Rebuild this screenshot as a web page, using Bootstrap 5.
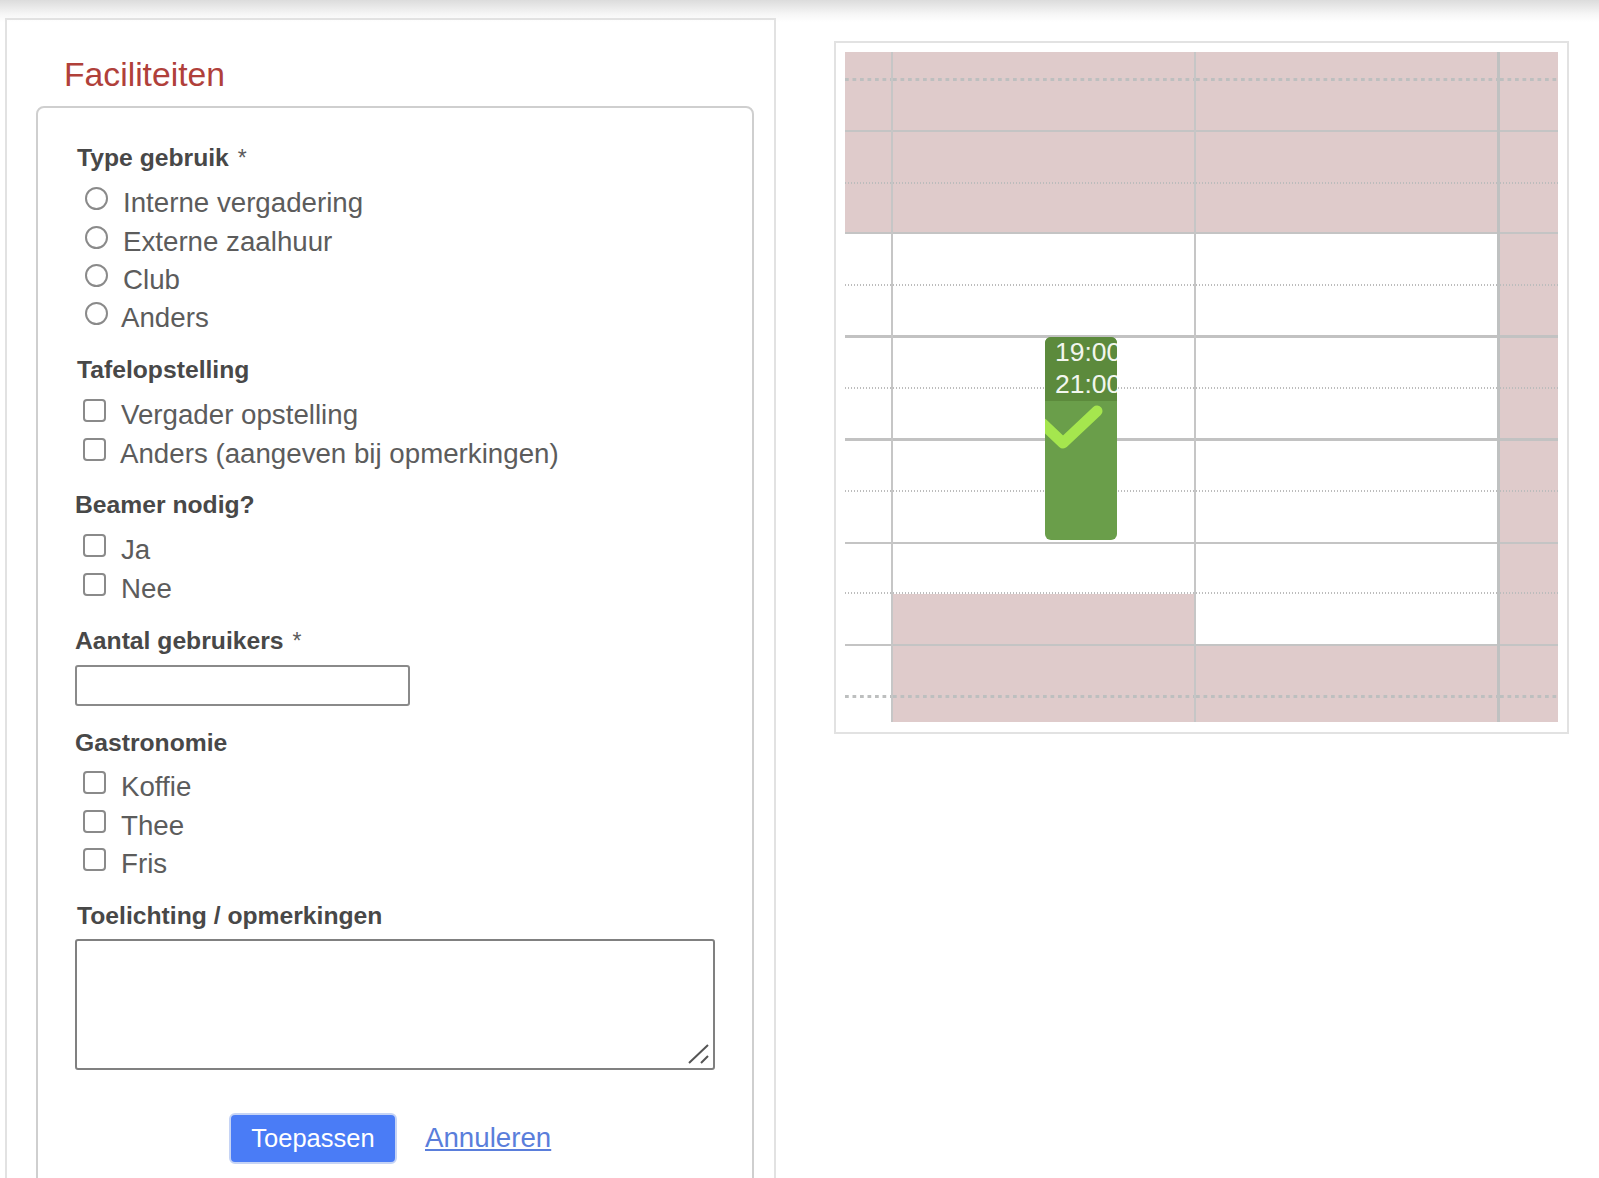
<!DOCTYPE html>
<html lang="nl">
<head>
<meta charset="utf-8">
<title>Faciliteiten</title>
<link rel="stylesheet" href="https://cdn.jsdelivr.net/npm/bootstrap@5.3.0/dist/css/bootstrap.min.css">
<style>
html, body { height: 1178px; overflow: hidden; }
body {
  font-family: "Liberation Sans", Arial, sans-serif;
  color: #555;
  background: #fff linear-gradient(to bottom, #dcdcdc, #f6f6f6 14px, #fff 22px) no-repeat top / 100% 22px;
}
.page-wrap { padding: 18px 0 0 5px; gap: 58px; }
.left-panel { width: 771px; height: 1300px; border: 2px solid #e2e2e2; padding: 34px 20px 0 29px; flex-shrink: 0; }
.panel-title { font-size: 33.7px; line-height: 40px; font-weight: 400; color: #b0403a; margin: 0 0 12px 28px; }
.form-box { border: 2px solid #cfcfcf; border-radius: 8px; padding: 35px 36px 200px 39px; }
.grp { margin-bottom: 17px; }
.grp-wide { margin-bottom: 18px; }
.grp-input { margin-bottom: 22px; }
.grp-food { margin-bottom: 17.5px; }
.grp-label { display: block; font-size: 24.7px; line-height: 30px; font-weight: 700; color: #484848; margin-bottom: 11px; }
.grp-label span { font-weight: 400; font-size: 23px; color: #5c5c5c; margin-left: 2px; }
.grp-label.tight { margin-bottom: 9px; }
.grp-label.tighter { margin-bottom: 8px; }
.grp-label.mid { margin-bottom: 10px; }
.grp-label.shift { margin-left: -2px; }
.opt { display: flex; align-items: center; height: 38.5px; min-height: 0; padding: 0; margin: 0; font-size: 27.7px; color: #5c5c5c; }
.opt.opt-up { padding-bottom: 2px; }
.form-check .form-check-input.opt-box {
  float: none; flex-shrink: 0; width: 23px; height: 23px; margin: -9px 15px 0 6px;
  border: 2px solid #8a8a8a; background-color: #fff; border-radius: 4px;
}
.form-check .form-check-input.opt-round { margin: -9px 15px 0 8px; border-radius: 50%; }
.form-check .form-check-input.opt-round.pull { margin-right: 13px; }
.form-check .form-check-input.opt-box.pull-one { margin-right: 14px; }
.num-input.form-control { width: 335px; height: 41px; margin-left: -2px; border: 2px solid #8a8a8a; border-radius: 3px; }
.note-wrap { width: 640px; height: 131px; margin-left: -2px; }
.note-input.form-control { width: 100%; height: 100%; resize: none; border: 2px solid #808080; border-radius: 3px; }
.grip { position: absolute; right: 4px; bottom: 5px; }
.act-row { gap: 28px; padding: 43px 0 0 152px; }
.act-btn.btn { width: 168px; height: 51px; padding: 0; font-size: 25.5px; line-height: 47px; background: #4a7cf6; border: 2px solid #c6d4f5; border-radius: 6px; color: #fff; }
.act-link { font-size: 27.7px; color: #5a7edb; margin-bottom: 2px; }
.cal-panel { width: 735px; height: 693px; margin-top: 23px; border: 2px solid #e2e2e2; padding: 9px 9px 0; flex-shrink: 0; }
.cal-grid { width: 713px; }
.cal-row { display: grid; grid-template-columns: 46px 303px 303px 61px; }
.cal-row:nth-child(1) { height: 29px; }
.cal-row:nth-child(2), .cal-row:nth-child(7), .cal-row:nth-child(9) { height: 51px; }
.cal-row:nth-child(3), .cal-row:nth-child(5), .cal-row:nth-child(6), .cal-row:nth-child(8), .cal-row:nth-child(10), .cal-row:nth-child(12), .cal-row:nth-child(13) { height: 52px; }
.cal-row:nth-child(4), .cal-row:nth-child(11) { height: 50px; }
.cal-row:nth-child(14) { height: 24px; }
.cal-row > div { background-repeat: repeat-x; background-position: left bottom; }
.cal-row > div:nth-child(2), .cal-row > div:nth-child(3) { border-left: 2px solid #c6c6c6; }
.cal-row > div:nth-child(4) { border-left: 3px solid #bfc1c1; }
.cal-row > div.closed { background-color: #dfcbcb; }
.ln-solid > div { background-image: linear-gradient(#c4c4c4, #c4c4c4); background-size: 100% 2px; }
.ln-heavy > div { background-image: linear-gradient(#c2c2c2, #c2c2c2); background-size: 100% 3px; }
.ln-dot > div { background-image: linear-gradient(to right, #bcbcbc 50%, transparent 50%); background-size: 3px 2px; }
.ln-bigdot > div { background-image: linear-gradient(to right, #bdbfbf 45%, transparent 45%); background-size: 7.5px 3px; }
.cal-event { position: absolute; left: 200px; top: 285px; width: 72px; height: 203px; background: #6a9e4a; border-radius: 6px; overflow: hidden; }
.ev-head { height: 64px; background: #5c8a3c; color: #f2f6ee; font-size: 26.5px; line-height: 31.5px; padding: 0 0 0 10px; white-space: nowrap; }
.ev-check { position: absolute; left: 0; top: 63px; }
</style>
</head>
<body>
<div class="page-wrap d-flex align-items-start">
  <section class="left-panel">
    <h2 class="panel-title">Faciliteiten</h2>
    <form class="form-box">
      <div class="grp">
        <label class="grp-label">Type gebruik <span>*</span></label>
        <div class="form-check opt"><input class="form-check-input opt-box opt-round" type="radio" name="t" id="r1"><label class="form-check-label" for="r1">Interne vergadering</label></div>
        <div class="form-check opt"><input class="form-check-input opt-box opt-round" type="radio" name="t" id="r2"><label class="form-check-label" for="r2">Externe zaalhuur</label></div>
        <div class="form-check opt"><input class="form-check-input opt-box opt-round" type="radio" name="t" id="r3"><label class="form-check-label" for="r3">Club</label></div>
        <div class="form-check opt opt-up"><input class="form-check-input opt-box opt-round pull" type="radio" name="t" id="r4"><label class="form-check-label" for="r4">Anders</label></div>
      </div>
      <div class="grp">
        <label class="grp-label">Tafelopstelling</label>
        <div class="form-check opt"><input class="form-check-input opt-box" type="checkbox" id="c1"><label class="form-check-label" for="c1">Vergader opstelling</label></div>
        <div class="form-check opt"><input class="form-check-input opt-box pull-one" type="checkbox" id="c2"><label class="form-check-label" for="c2">Anders (aangeven bij opmerkingen)</label></div>
      </div>
      <div class="grp-wide">
        <label class="grp-label shift">Beamer nodig?</label>
        <div class="form-check opt"><input class="form-check-input opt-box" type="checkbox" id="c3"><label class="form-check-label" for="c3">Ja</label></div>
        <div class="form-check opt"><input class="form-check-input opt-box" type="checkbox" id="c4"><label class="form-check-label" for="c4">Nee</label></div>
      </div>
      <div class="grp-input">
        <label class="grp-label tight shift">Aantal gebruikers <span>*</span></label>
        <input class="form-control num-input" type="text">
      </div>
      <div class="grp-food">
        <label class="grp-label mid shift">Gastronomie</label>
        <div class="form-check opt"><input class="form-check-input opt-box" type="checkbox" id="c5"><label class="form-check-label" for="c5">Koffie</label></div>
        <div class="form-check opt"><input class="form-check-input opt-box" type="checkbox" id="c6"><label class="form-check-label" for="c6">Thee</label></div>
        <div class="form-check opt"><input class="form-check-input opt-box" type="checkbox" id="c7"><label class="form-check-label" for="c7">Fris</label></div>
      </div>
      <div>
        <label class="grp-label tighter">Toelichting / opmerkingen</label>
        <div class="note-wrap position-relative">
          <textarea class="form-control note-input"></textarea>
          <svg class="grip" width="24" height="22" viewBox="0 0 24 22" aria-hidden="true"><path d="M2 20 21 2M14 20 21 13" stroke="#555" stroke-width="2" fill="none"/></svg>
        </div>
      </div>
      <div class="act-row d-flex align-items-center">
        <button type="button" class="btn btn-primary act-btn">Toepassen</button>
        <a href="#" class="act-link">Annuleren</a>
      </div>
    </form>
  </section>
  <section class="cal-panel">
    <div class="cal-grid position-relative">
      <div class="cal-row ln-bigdot"><div class="closed"></div><div class="closed"></div><div class="closed"></div><div class="closed"></div></div>
      <div class="cal-row ln-solid"><div class="closed"></div><div class="closed"></div><div class="closed"></div><div class="closed"></div></div>
      <div class="cal-row ln-dot"><div class="closed"></div><div class="closed"></div><div class="closed"></div><div class="closed"></div></div>
      <div class="cal-row ln-solid"><div class="closed"></div><div class="closed"></div><div class="closed"></div><div class="closed"></div></div>
      <div class="cal-row ln-dot"><div></div><div></div><div></div><div class="closed"></div></div>
      <div class="cal-row ln-heavy"><div></div><div></div><div></div><div class="closed"></div></div>
      <div class="cal-row ln-dot"><div></div><div></div><div></div><div class="closed"></div></div>
      <div class="cal-row ln-heavy"><div></div><div></div><div></div><div class="closed"></div></div>
      <div class="cal-row ln-dot"><div></div><div></div><div></div><div class="closed"></div></div>
      <div class="cal-row ln-solid"><div></div><div></div><div></div><div class="closed"></div></div>
      <div class="cal-row ln-dot"><div></div><div></div><div></div><div class="closed"></div></div>
      <div class="cal-row ln-solid"><div></div><div class="closed"></div><div></div><div class="closed"></div></div>
      <div class="cal-row ln-bigdot"><div></div><div class="closed"></div><div class="closed"></div><div class="closed"></div></div>
      <div class="cal-row"><div></div><div class="closed"></div><div class="closed"></div><div class="closed"></div></div>
      <div class="cal-event">
        <div class="ev-head">19:00<br>21:00</div>
        <svg class="ev-check" width="72" height="60" viewBox="0 0 72 60" aria-hidden="true"><path d="M-2 24 18 43 52 11" stroke="#a5e64e" stroke-width="11" fill="none" stroke-linejoin="round" stroke-linecap="round"/></svg>
      </div>
    </div>
  </section>
</div>
<script src="https://cdn.jsdelivr.net/npm/bootstrap@5.3.0/dist/js/bootstrap.bundle.min.js"></script>
</body>
</html>
